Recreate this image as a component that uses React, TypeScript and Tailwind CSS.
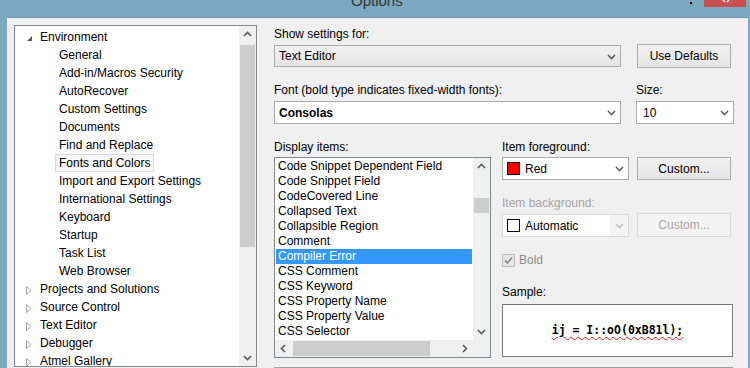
import React from "react";

type Dir = "up" | "down" | "left" | "right";

const chevronPaths: Record<Dir, string> = {
  down: "M1 3 L4.5 6.5 L8 3",
  up: "M1 6 L4.5 2.5 L8 6",
  left: "M6 1 L2.5 4.5 L6 8",
  right: "M3 1 L6.5 4.5 L3 8",
};

const Chevron = ({ dir = "down", color = "#5a5a5a" }: { dir?: Dir; color?: string }) => (
  <svg width="9" height="9" viewBox="0 0 9 9">
    <path d={chevronPaths[dir]} stroke={color} strokeWidth="1.6" fill="none" />
  </svg>
);

const tree: { label: string; level: number; open?: boolean; focus?: boolean }[] = [
  { label: "Environment", level: 0, open: true },
  { label: "General", level: 1 },
  { label: "Add-in/Macros Security", level: 1 },
  { label: "AutoRecover", level: 1 },
  { label: "Custom Settings", level: 1 },
  { label: "Documents", level: 1 },
  { label: "Find and Replace", level: 1 },
  { label: "Fonts and Colors", level: 1, focus: true },
  { label: "Import and Export Settings", level: 1 },
  { label: "International Settings", level: 1 },
  { label: "Keyboard", level: 1 },
  { label: "Startup", level: 1 },
  { label: "Task List", level: 1 },
  { label: "Web Browser", level: 1 },
  { label: "Projects and Solutions", level: 0 },
  { label: "Source Control", level: 0 },
  { label: "Text Editor", level: 0 },
  { label: "Debugger", level: 0 },
  { label: "Atmel Gallery", level: 0 },
];

const displayItems = [
  "Code Snippet Dependent Field",
  "Code Snippet Field",
  "CodeCovered Line",
  "Collapsed Text",
  "Collapsible Region",
  "Comment",
  "Compiler Error",
  "CSS Comment",
  "CSS Keyword",
  "CSS Property Name",
  "CSS Property Value",
  "CSS Selector",
];

const Swatch = ({ color }: { color: string }) => (
  <div className={`w-[13px] h-[13px] border border-black ${color}`} />
);

const App: React.FC = () => {
  return (
    <div className="w-[750px] h-[368px] overflow-hidden bg-[#7ca9bf] font-['Liberation_Sans',Arial,sans-serif] text-[12px] text-black">
      {/* title bar */}
      <div className="h-[17px] flex items-start">
        <div className="w-[351px]" />
        <div className="-mt-[9px] text-[15px] leading-[20px] text-[#333]">Options</div>
        <div className="flex-1" />
        <div className="w-[2px] h-[2px] bg-black mt-[2px] mr-[12px]" />
        <div className="w-[42px] h-[7px] bg-[#c75050] mr-[4px] flex justify-center">
          <svg width="8" height="3" viewBox="0 0 8 3" className="ml-[2px]">
            <path d="M1 0 L3 2 M7 0 L5 2" stroke="#fff" strokeWidth="1.3" />
          </svg>
        </div>
      </div>

      {/* window body */}
      <div className="ml-[7px] mr-[2px] h-[351px] bg-[#f0f0f0] border-t border-[#6d97ab] flex pt-[7px] pl-[7px]">
        {/* tree */}
        <div className="w-[243px] h-[342px] border border-[#828790] bg-white flex">
          <div className="flex-1 pt-[2px] overflow-hidden">
            {tree.map((t) =>
              t.level === 0 ? (
                <div key={t.label} className="h-[18px] flex items-center pl-[11px] whitespace-nowrap">
                  <div className="w-[7px] flex items-center">
                    {t.open ? (
                      <svg width="7" height="7" viewBox="0 0 7 7" className="mt-[2px]">
                        <path d="M6 1 L6 6 L1 6 Z" fill="#595959" />
                      </svg>
                    ) : (
                      <svg width="6" height="9" viewBox="0 0 6 9" className="mt-[3px]">
                        <path d="M0.5 0.5 L5 4.5 L0.5 8.5 Z" fill="none" stroke="#a6a6a6" strokeWidth="1" />
                      </svg>
                    )}
                  </div>
                  <span className="ml-[7px]">{t.label}</span>
                </div>
              ) : (
                <div key={t.label} className="h-[18px] flex pl-[40px] whitespace-nowrap">
                  <span
                    className={`px-[3px] flex items-center border ${
                      t.focus ? "border-[#dadada] bg-[#f7f7f7]" : "border-transparent"
                    }`}
                  >
                    {t.label}
                  </span>
                </div>
              )
            )}
          </div>
          <div className="w-[17px] bg-[#f0f0f0] flex flex-col">
            <div className="h-[17px] flex items-center justify-center">
              <Chevron dir="up" />
            </div>
            <div className="mx-[1px] mt-[2px] h-[202px] bg-[#cdcdcd]" />
            <div className="flex-1" />
            <div className="h-[17px] flex items-center justify-center">
              <Chevron dir="down" />
            </div>
          </div>
        </div>

        {/* settings */}
        <div className="ml-[17px] w-[460px]">
          <div className="h-[18px] leading-[18px]">Show settings for:</div>
          <div className="mt-[1px] h-[24px] flex items-center">
            <div className="w-[347px] h-[22px] border border-[#acacac] bg-linear-to-b from-[#f2f2f2] to-[#e5e5e5] flex items-center pl-[4px] pr-[4px]">
              <span className="flex-1">Text Editor</span>
              <Chevron />
            </div>
            <div className="ml-[16px] w-[94px] h-[24px] border border-[#acacac] bg-linear-to-b from-[#f2f2f2] to-[#e5e5e5] flex items-center justify-center">
              Use Defaults
            </div>
          </div>

          <div className="mt-[13px] h-[18px] leading-[18px] flex">
            <div className="w-[362px]">Font (bold type indicates fixed-width fonts):</div>
            <div>Size:</div>
          </div>
          <div className="mt-[2px] flex">
            <div className="w-[347px] h-[23px] border border-[#acacac] bg-white flex items-center pl-[4px] pr-[4px]">
              <span className="flex-1 font-bold">Consolas</span>
              <Chevron />
            </div>
            <div className="ml-[15px] w-[98px] h-[23px] border border-[#acacac] bg-white flex items-center pl-[6px] pr-[4px]">
              <span className="flex-1">10</span>
              <Chevron />
            </div>
          </div>

          <div className="mt-[14px] flex">
            {/* display items */}
            <div className="w-[217px]">
              <div className="h-[18px] leading-[18px]">Display items:</div>
              <div className="mt-[1px] h-[201px] border border-[#828790] bg-white flex flex-col">
                <div className="h-[182px] flex">
                  <div className="flex-1 pt-[1px] px-[1px] overflow-hidden">
                    {displayItems.map((d) => (
                      <div
                        key={d}
                        className={`h-[15px] leading-[15px] pl-[2px] whitespace-nowrap ${
                          d === "Compiler Error" ? "bg-[#3399ff] text-white" : ""
                        }`}
                      >
                        {d}
                      </div>
                    ))}
                  </div>
                  <div className="w-[17px] bg-[#f0f0f0] flex flex-col">
                    <div className="h-[17px] flex items-center justify-center">
                      <Chevron dir="up" />
                    </div>
                    <div className="mx-[1px] mt-[23px] h-[15px] bg-[#cdcdcd]" />
                    <div className="flex-1" />
                    <div className="h-[17px] flex items-center justify-center">
                      <Chevron dir="down" />
                    </div>
                  </div>
                </div>
                <div className="h-[17px] flex bg-[#f0f0f0]">
                  <div className="w-[17px] flex items-center justify-center">
                    <Chevron dir="left" />
                  </div>
                  <div className="ml-[1px] my-[1px] w-[137px] bg-[#cdcdcd]" />
                  <div className="flex-1" />
                  <div className="w-[17px] flex items-center justify-center">
                    <Chevron dir="right" />
                  </div>
                  <div className="w-[17px] bg-[#f0f0f0]" />
                </div>
              </div>
            </div>

            {/* item colours */}
            <div className="ml-[11px] w-[232px]">
              <div className="h-[18px] leading-[18px]">Item foreground:</div>
              <div className="mt-[1px] flex items-start">
                <div className="w-[127px] h-[23px] border border-[#acacac] bg-white flex items-center pl-[4px] pr-[4px]">
                  <Swatch color="bg-[#ff0000]" />
                  <span className="ml-[5px] flex-1">Red</span>
                  <Chevron />
                </div>
                <div className="ml-[8px] w-[94px] h-[23px] border border-[#acacac] bg-linear-to-b from-[#f2f2f2] to-[#e5e5e5] flex items-center justify-center">
                  Custom...
                </div>
              </div>

              <div className="mt-[14px] h-[18px] leading-[18px] text-[#a6a6a6]">Item background:</div>
              <div className="mt-[1px] flex items-start">
                <div className="w-[127px] h-[23px] mt-[1px] border border-[#d9d9d9] bg-white flex items-center pl-[4px]">
                  <Swatch color="bg-white" />
                  <span className="ml-[5px] flex-1">Automatic</span>
                  <div className="w-[18px] h-full bg-[#f4f4f4] flex items-center justify-center">
                    <Chevron color="#c2c2c2" />
                  </div>
                </div>
                <div className="ml-[8px] w-[94px] h-[24px] border border-[#d9d9d9] bg-[#f4f4f4] flex items-center justify-center text-[#a6a6a6]">
                  Custom...
                </div>
              </div>

              <div className="mt-[14px] h-[18px] flex items-center">
                <div className="w-[13px] h-[13px] border border-[#bcbcbc] bg-[#e6e6e6] flex items-center justify-center">
                  <svg width="11" height="11" viewBox="0 0 11 11">
                    <path d="M2 5.5 L4.5 8 L9 2.5" stroke="#8c8c8c" strokeWidth="1.8" fill="none" />
                  </svg>
                </div>
                <span className="ml-[4px] text-[#8a8a8a]">Bold</span>
              </div>

              <div className="mt-[14px] h-[18px] leading-[18px]">Sample:</div>
              <div className="mt-[3px] w-[231px] h-[53px] border border-[#7a7a7a] bg-white flex items-center justify-center">
                <span className="font-['DejaVu_Sans_Mono','Liberation_Mono',monospace] font-bold text-[11.5px] whitespace-pre underline decoration-wavy decoration-[#e02020] decoration-1 underline-offset-2">
                  ij = I::oO(0xB81l);
                </span>
              </div>
            </div>
          </div>

          <div className="mt-[9px] h-px w-[459px] bg-[#a0a0a0]" />
        </div>
      </div>
    </div>
  );
};

export default App;
